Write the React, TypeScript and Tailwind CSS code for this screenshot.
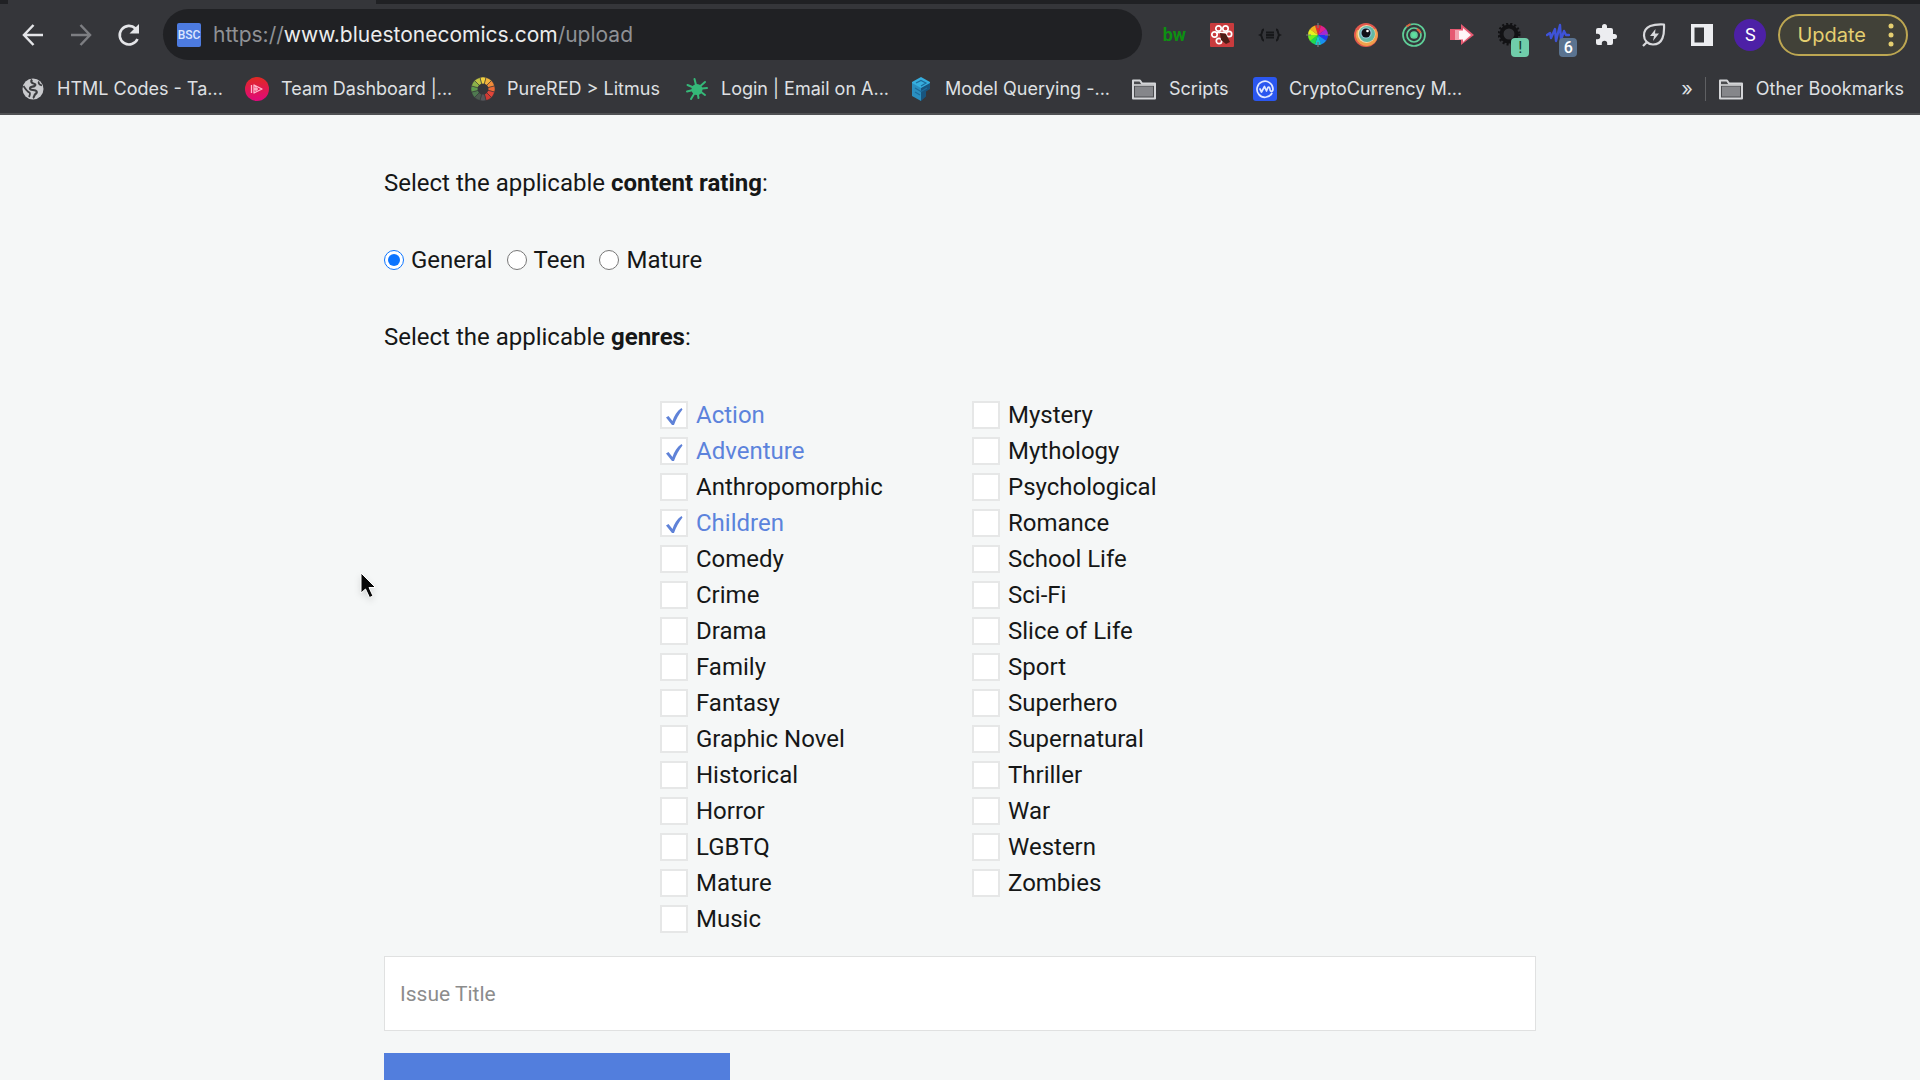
import React, { useState } from "react";

const LEFT_GENRES = ["Action", "Adventure", "Anthropomorphic", "Children", "Comedy", "Crime", "Drama", "Family", "Fantasy", "Graphic Novel", "Historical", "Horror", "LGBTQ", "Mature", "Music"];
const RIGHT_GENRES = ["Mystery", "Mythology", "Psychological", "Romance", "School Life", "Sci-Fi", "Slice of Life", "Sport", "Superhero", "Supernatural", "Thriller", "War", "Western", "Zombies"];

function Folder() {
  return (
    <svg viewBox="0 0 26 24" className="h-6 w-[26px] shrink-0">
      <path d="M2 3.5h7l2 3h13v15H2z" fill="#4a4b4e" stroke="#d4d5d8" strokeWidth="2" strokeLinejoin="round" />
      <path d="M4 9.5h18v10H4z" fill="#85868a" />
      <path d="M2 8h22" stroke="#d4d5d8" strokeWidth="1.6" />
    </svg>
  );
}

function Globe() {
  return (
    <svg viewBox="0 0 24 24" className="size-6">
      <circle cx="12" cy="12" r="10.5" fill="#c9cacd" />
      <path d="M11 2.5c-1.5 2-.5 3.5 1.5 4 2 .4 2.500 1.500 1 2.500-1.500 1-4.500.5-4.500 2.500 0 1.800 3 1.200 5.500 2 2 .8 1.500 2.500 0 3.500-1.500 1-1 3-2.500 4" fill="none" stroke="#3c3d40" strokeWidth="2.200" />
      <path d="M2.500 9c2 3 3.500 5.500 6 6.500 1 1 .2 3-.5 4.500M18 4.500c-1 1.500 0 3 3 4" fill="none" stroke="#3c3d40" strokeWidth="1.800" />
    </svg>
  );
}

function Play() {
  return (
    <svg viewBox="0 0 24 24" className="size-6">
      <defs>
        <linearGradient id="play" x1="0" y1="0" x2="0" y2="1">
          <stop offset="0" stopColor="#e02a22" />
          <stop offset="1" stopColor="#e0087c" />
        </linearGradient>
      </defs>
      <circle cx="12" cy="12" r="12" fill="url(#play)" />
      <path d="M6.500 8v8M9 8l8 4-8 4zM9 12h4M11 10v4" fill="none" stroke="#ffb8cc" strokeWidth="1.300" strokeLinejoin="round" />
    </svg>
  );
}

const LITMUS = ["#f0d040", "#f3b33c", "#f08c3a", "#ea6a35", "#e2453a", "#cf3a34", "#55565a", "#4c5a50", "#4f7a50", "#5f9a4e", "#8bb24a", "#c0c445"];
function Litmus() {
  return (
    <svg viewBox="0 0 24 24" className="size-6">
      {LITMUS.map((c, i) => (
        <path key={c} d="M12 12L8.900.4A12 12 0 0 1 15.100.4z" fill={c} stroke="#35363a" strokeWidth=".5" transform={`rotate(${i * 30} 12 12)`} />
      ))}
      <circle cx="12" cy="12" r="5.500" fill="#35363a" />
    </svg>
  );
}

function Splat() {
  return (
    <svg viewBox="0 0 24 24" className="size-6">
      <circle cx="12" cy="12.500" r="5.500" fill="#35b878" />
      <path d="M12 12L2.500 8M12 12L9.500 2M12 12l8-7M12 12l10-1M12 12l8 6M12 12l1.500 9M12 12l-6 10M12 12L2 14.500" stroke="#35b878" strokeWidth="2" strokeLinecap="round" />
    </svg>
  );
}

function Cube() {
  return (
    <svg viewBox="0 0 24 24" className="size-6">
      <path d="M12 0l9 5v4l-9 5-9-5V5z" fill="#36aede" />
      <path d="M3 6l9 5v13l-9-5z" fill="#2a8fc0" />
      <path d="M12 11l9-5v6l-4 2.500v5L12 24z" fill="#18557f" />
      <path d="M7 6l5-2.500L17 6l-5 3M6 11l6 3.500 6-3.500M6 15l5 3" fill="none" stroke="#1c6c9c" strokeWidth="1.200" />
    </svg>
  );
}

function Coin() {
  return (
    <svg viewBox="0 0 24 24" className="size-6">
      <rect width="24" height="24" rx="3" fill="#2b57f0" />
      <path d="M18.800 16.500A8 8 0 1 1 20 12c0 3-3 3-3 .5 0-2-1.500-3.500-2.500-1l-1 2.500-2-4.500L8.500 15 7 12" fill="none" stroke="#dfe7ff" strokeWidth="1.700" strokeLinecap="round" strokeLinejoin="round" />
    </svg>
  );
}

const BOOKMARKS = [
  { label: "HTML Codes - Ta...", icon: <Globe />, width: "w-[224px]" },
  { label: "Team Dashboard |...", icon: <Play />, width: "w-[226px]" },
  { label: "PureRED > Litmus", icon: <Litmus />, width: "w-[214px]" },
  { label: "Login | Email on A...", icon: <Splat />, width: "w-[224px]" },
  { label: "Model Querying -...", icon: <Cube />, width: "w-[222px]" },
  { label: "Scripts", icon: <Folder />, width: "w-[122px]" },
  { label: "CryptoCurrency M...", icon: <Coin />, width: "w-[220px]" },
];

const WHEEL = ["#e02a30", "#e0208c", "#a028d8", "#2038f0", "#1890f0", "#18c8d0", "#20d850", "#70f020", "#e8f020", "#f0b020"];

function EyeIcon() {
  return (
    <svg viewBox="0 0 24 24" className="size-6">
      <circle cx="12" cy="12" r="12" fill="#e2584c" />
      <path d="M3 7a11 11 0 1 0 19-1" fill="#f0a04c" />
      <circle cx="12.500" cy="11" r="9" fill="#f3dcae" />
      <circle cx="13" cy="11" r="8" fill="#62b8a4" />
      <circle cx="12" cy="10" r="5.800" fill="#8fc4d6" />
      <circle cx="12" cy="10" r="4.500" fill="#101018" />
      <circle cx="13.500" cy="8" r="1.300" fill="#fff" />
    </svg>
  );
}

function Extensions() {
  return (
    <div className="flex items-center gap-6 pl-5">
      <button aria-label="BW extension" className="w-6 text-center font-[Roboto] text-lg leading-6 font-bold text-[#0e8f12]">
        bw
      </button>
      <button aria-label="Bug tracker">
        <svg viewBox="0 0 24 24" className="size-6">
          <rect width="24" height="24" rx="1" fill="#c93b3d" />
          <g fill="none" stroke="#fff" strokeWidth="1.700">
            <circle cx="8.500" cy="5.500" r="2.700" />
            <circle cx="15.500" cy="5.500" r="2.700" />
            <circle cx="4.500" cy="11.500" r="2.700" />
            <circle cx="19" cy="11" r="2.700" />
            <circle cx="9" cy="18" r="2.700" />
            <path d="M7 9.500h9" />
          </g>
          <path d="M10 10l6 1 4 8-4 2-5-4z" fill="#4c1d16" />
        </svg>
      </button>
      <button aria-label="Code blocks">
        <svg viewBox="0 0 24 24" className="size-6" fill="none" stroke="#17181a" strokeWidth="2">
          <path d="M6 6.500c-3 0-1 4.500-3.500 5.500C5 13 3 17.500 6 17.500M18 6.500c3 0 1 4.500 3.500 5.500-2.500 1-.5 5.500-3.500 5.500M8 9.500h8M8 12h8M8 14.500h8" />
        </svg>
      </button>
      <button aria-label="Color picker">
        <svg viewBox="0 0 24 24" className="size-6">
          {WHEEL.map((c, i) => (
            <path key={c} d="M12 12L8.800 2.500a10 10 0 0 1 6.400 0z" fill={c} transform={`rotate(${i * 36} 12 12)`} />
          ))}
          <path d="M12 0v5M12 19v5M0 12h5M19 12h5" stroke="#77797c" strokeWidth="1.200" />
        </svg>
      </button>
      <button aria-label="Eye dropper"><EyeIcon /></button>
      <button aria-label="Radar">
        <svg viewBox="0 0 24 24" className="size-6" fill="none" stroke="#5fcf98" strokeWidth="1.700">
          <circle cx="12" cy="12" r="11" />
          <circle cx="12" cy="12" r="7" />
          <circle cx="12" cy="12" r="3" fill="#5fe0a0" />
          <path d="M4.500 3.500l4-2.500M15 6a7 7 0 0 1 3.500 4" stroke="#e2603c" strokeWidth="2" />
        </svg>
      </button>
      <button aria-label="Forward arrow">
        <svg viewBox="0 0 24 24" className="size-6">
          <path d="M0 6h11V1l13 11-13 10v-5H0z" fill="#e65a72" />
          <path d="M5 7h8l6 5-6 5H5z" fill="#f3a3b0" />
          <path d="M9 8h4V5l8 7-8 7v-3H9z" fill="#fff" opacity=".9" />
        </svg>
      </button>
      <button aria-label="Status alert" className="relative">
        <svg viewBox="0 0 24 24" className="size-6" fill="none" stroke="#121214">
          <circle cx="11" cy="11" r="7.500" strokeWidth="4" />
          <circle cx="11" cy="11" r="10" strokeWidth="3" strokeDasharray="2 2" />
        </svg>
        <span className="absolute top-[15px] left-[13px] h-[19px] w-[18px] rounded-sm bg-[#70cdaa] text-center font-[Roboto] text-base leading-[19px] text-[#173a2c]">!</span>
      </button>
      <button aria-label="Activity" className="relative">
        <svg viewBox="0 0 24 24" className="size-6" fill="none" stroke="#3e53d8" strokeWidth="2.400" strokeLinecap="round" strokeLinejoin="round">
          <path d="M1 12l3-2 1 5 4-9 1 12 4-16 1 15 3-9 2 4h3" />
        </svg>
        <span className="absolute top-[15px] left-[13px] h-[19px] w-[18px] rounded-sm bg-[#5a7390] text-center font-[Roboto] text-base leading-[19px] font-medium text-white">6</span>
      </button>
      <button aria-label="Extensions">
        <svg viewBox="0 0 24 24" className="size-6" fill="#ecedf0">
          <path d="M20.500 11H19V7a2 2 0 0 0-2-2h-4V3.500a2.500 2.500 0 0 0-5 0V5H4a2 2 0 0 0-2 2v3.800h1.500a2.700 2.700 0 0 1 0 5.400H2V20a2 2 0 0 0 2 2h3.800v-1.500a2.700 2.700 0 0 1 5.400 0V22H17a2 2 0 0 0 2-2v-4h1.500a2.500 2.500 0 0 0 0-5z" />
        </svg>
      </button>
      <button aria-label="Energy saver">
        <svg viewBox="0 0 24 24" className="size-6" fill="none" stroke="#d8d9dc" strokeWidth="2.200" strokeLinejoin="round">
          <path d="M22 1.500c-10-.5-20 1-20 11 0 5 4 9 9 9 10 0 11.500-10 11-20zM1 23l4-4" />
          <path d="M13.500 6L8 13h4l-1 5 6-7.500h-4z" fill="#d8d9dc" stroke="none" />
        </svg>
      </button>
      <button aria-label="Side panel">
        <svg viewBox="0 0 24 24" className="size-6">
          <path d="M1 1h22v22H1zM4.500 4.500v15H14v-15z" fill="#ecedf0" fillRule="evenodd" />
        </svg>
      </button>
    </div>
  );
}

function Browser() {
  return (
    <header className="border-b-2 border-[#505154] bg-[#35363a] font-[Inter] text-[#dfe0e3]">
      <div className="flex h-1 bg-[#202124]">
        <div className="ml-2 h-1 w-[368px] bg-[#35363a]" />
      </div>
      <div className="flex h-[61px] items-center">
        <nav className="flex shrink-0 gap-6 pr-[22px] pl-[21px]">
          <button aria-label="Back">
            <svg viewBox="0 0 24 24" className="size-6" fill="none" stroke="#e4e5e8" strokeWidth="2.500"><path d="M22 12H3M12.500 2L3 12l9.500 10" /></svg>
          </button>
          <button aria-label="Forward">
            <svg viewBox="0 0 24 24" className="size-6" fill="none" stroke="#7d7e82" strokeWidth="2.500"><path d="M2 12h19M11.500 2L21 12l-9.500 10" /></svg>
          </button>
          <button aria-label="Reload">
            <svg viewBox="0 0 24 24" className="size-6" fill="none" stroke="#e4e5e8" strokeWidth="2.600"><path d="M20.500 16A9.300 9.300 0 1 1 18.500 5.500" /><path d="M22 1v9.500h-9.500z" fill="#e4e5e8" stroke="none" /></svg>
          </button>
        </nav>
        <div className="flex h-[51px] min-w-0 grow items-center rounded-full bg-[#202124] pl-[14px]">
          <span className="flex size-6 shrink-0 items-center justify-center rounded-xs bg-[#4d7be0] font-[Roboto] text-xs font-medium text-[#dbe6ff]">BSC</span>
          <span className="ml-3 truncate text-[21px] text-[#8f9195]">
            https://<span className="text-[#eceded]">www.bluestonecomics.com</span>/upload
          </span>
        </div>
        <Extensions />
        <div className="flex shrink-0 items-center gap-3 pr-3 pl-5">
          <button aria-label="Profile" className="size-8 rounded-full bg-[#4d20a6] font-[Roboto] text-lg text-white">S</button>
          <button className="flex h-[42px] items-center gap-[22px] rounded-full border-2 border-[#bda752] bg-[#414138] pr-3 pl-[17px] text-xl text-[#e5cf70]">
            Update
            <svg viewBox="0 0 6 24" className="h-6 w-[6px]" fill="#e5cf70"><circle cx="3" cy="3" r="2.500" /><circle cx="3" cy="12" r="2.500" /><circle cx="3" cy="21" r="2.500" /></svg>
          </button>
        </div>
      </div>
      <div className="flex h-12 items-center pr-4 pl-[21px] text-lg">
        {BOOKMARKS.map((b) => (
          <a key={b.label} href="#" className={`flex shrink-0 items-center gap-3 whitespace-nowrap ${b.width}`}>
            {b.icon}
            {b.label}
          </a>
        ))}
        <button aria-label="More bookmarks" className="ml-auto text-xl leading-6">»</button>
        <div className="mx-3 h-6 w-px bg-[#5f6063]" />
        <a href="#" className="flex shrink-0 items-center gap-3 whitespace-nowrap"><Folder />Other Bookmarks</a>
      </div>
    </header>
  );
}

function Genre({ name, checked, onToggle }: { name: string; checked: boolean; onToggle: () => void }) {
  return (
    <label className={`flex h-9 items-center gap-2 whitespace-nowrap ${checked ? "text-[#5c83dc]" : ""}`}>
      <span className="grid size-7 shrink-0">
        <input type="checkbox" checked={checked} onChange={onToggle} className="col-start-1 row-start-1 size-7 appearance-none border-2 border-[#e6e7e7] bg-white" />
        {checked && (
          <svg viewBox="0 0 28 28" className="pointer-events-none col-start-1 row-start-1 size-7">
            <path d="M6 16.500l2.500-1.500 4 5C14 15 17 10 21.500 7l1 1.500C19 13 16 18 14 24h-2z" fill="#5f82d8" />
          </svg>
        )}
      </span>
      {name}
    </label>
  );
}

export default function App() {
  const [rating, setRating] = useState("General");
  const [genres, setGenres] = useState(["Action", "Adventure", "Children"]);
  const toggle = (g: string) => setGenres((list) => (list.includes(g) ? list.filter((x) => x !== g) : [...list, g]));

  return (
    <div className="h-screen overflow-hidden bg-[#f5f7f7] font-[Roboto] text-2xl leading-9 text-[#161717]">
      <Browser />
      <form className="mx-auto w-3/5 pt-[50px]" onSubmit={(e) => e.preventDefault()}>
        <p>Select the applicable <strong className="font-bold">content rating</strong>:</p>
        <div className="my-[41px] flex gap-[14px]" role="radiogroup" aria-label="Content rating">
          {["General", "Teen", "Mature"].map((r) => (
            <label key={r} className="flex items-center gap-[7px]">
              <input type="radio" name="rating" checked={rating === r} onChange={() => setRating(r)} className="size-5 accent-[#0b74ff]" />
              {r}
            </label>
          ))}
        </div>
        <p>Select the applicable <strong className="font-bold">genres</strong>:</p>
        <div className="mx-auto mt-[42px] grid max-w-[600px] grid-cols-2 gap-x-6">
          {[LEFT_GENRES, RIGHT_GENRES].map((column) => (
            <div key={column[0]}>
              {column.map((g) => (
                <Genre key={g} name={g} checked={genres.includes(g)} onToggle={() => toggle(g)} />
              ))}
            </div>
          ))}
        </div>
        <input aria-label="Issue Title" placeholder="Issue Title" className="mt-[19px] block h-[75px] w-full border border-[#e0e1e1] bg-white px-[15px] text-[21px] placeholder:text-[#8c8c8c]" />
        <button type="submit" aria-label="Submit" className="mt-[22px] block h-[75px] w-[30%] bg-[#527edd]" />
      </form>
      <svg aria-hidden="true" viewBox="0 0 18 28" className="pointer-events-none absolute top-[572px] left-[360px] h-7 w-[18px] drop-shadow-md">
        <path d="M1 1v20l4.500-4 4 8.500 3.500-1.500-4-8.500h6.500z" fill="#080808" stroke="#fff" strokeWidth="1" />
      </svg>
    </div>
  );
}
